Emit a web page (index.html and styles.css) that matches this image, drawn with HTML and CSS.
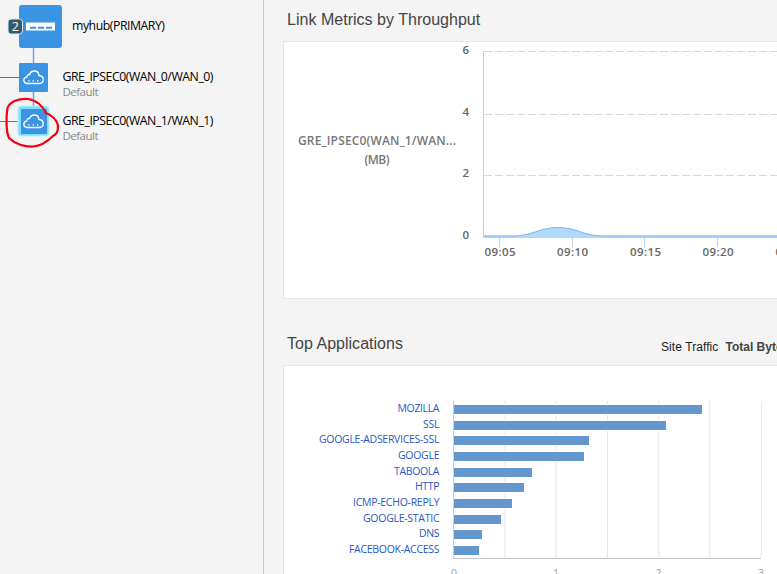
FILE: index.html
```
<!DOCTYPE html>
<html lang="en">
<head>
<meta charset="utf-8">
<title>Link Metrics</title>
<link rel="stylesheet" href="styles.css">
</head>
<body>
<div class="app">
  <aside class="sidebar">
    <svg class="topology" width="263" height="574" viewBox="0 0 263 574">
      <defs>
        <g id="cloud" fill="none" stroke="#fff" stroke-width="1.3">
          <path d="M4 13.5C1.5 13.3.8 12 .8 10.3.8 8.4 2 7.3 3.8 7.2 3.6 5 5.2 4.2 6.5 4.6 7.4 2.2 9 1 11.2 1c2.8 0 4.6 1.8 4.7 4.5 2.9.2 4.3 1.8 4.3 4s-1.4 4-3.8 4z"/>
          <path d="M5.2 10.8h1.4M9.6 10.8H11M14 10.8h1.4"/>
        </g>
      </defs>
      <path class="link" d="M33.5 48v15M33.5 92v15"/>
      <path class="tunnel" d="M0 77.500h19M0 121.500h18"/>
      <rect class="node" x="19" y="5" width="43" height="43" rx="3"/>
      <rect x="26" y="22.500" width="29" height="8" fill="#fff"/>
      <path d="M30 27.800h6M38 27.800h6M46 27.800h6" stroke="#3b93e3" stroke-width="2"/>
      <rect class="badge" x="8" y="19" width="14.500" height="15" rx="3"/>
      <text class="badge-text" x="15.400" y="30.500">2</text>
      <rect class="node" x="19" y="63" width="29" height="29" rx="1"/>
      <use href="#cloud" x="23" y="70"/>
      <rect class="glow" x="18" y="106" width="31" height="30" rx="3"/>
      <rect class="node" x="21" y="109" width="26" height="25" rx="1"/>
      <use href="#cloud" x="23" y="114"/>
      <path class="marker" d="M46 113C43 106 36 100 28 99 19 98.500 10 101 7.500 108 6 117 6 132 9 138 15 144 25 147 33 146.500 41 146 48 141 53 136 58 134 58 129 58 125 56 119 51 115 46 113"/>
      <text class="name" x="72" y="30" textLength="93">myhub(PRIMARY)</text>
      <text class="name" x="62.500" y="81" textLength="151">GRE_IPSEC0(WAN_0/WAN_0)</text>
      <text class="sub" x="62.500" y="96" textLength="36">Default</text>
      <text class="name" x="62.500" y="125" textLength="151">GRE_IPSEC0(WAN_1/WAN_1)</text>
      <text class="sub" x="62.500" y="140" textLength="36">Default</text>
    </svg>
  </aside>
  <main class="main">
    <header class="head"><h2>Link Metrics by Throughput</h2></header>
    <section class="panel throughput">
      <svg width="493" height="256" viewBox="284 42 493 256">
        <g class="series">
          <text x="377" y="145" textLength="158">GRE_IPSEC0(WAN_1/WAN...</text>
          <text x="377" y="164" textLength="25">(MB)</text>
        </g>
        <path class="dash" d="M484 51.500h293M484 114.500h293M484 175.500h293"/>
        <path d="M484 235.800h29C532 235.800 539 227.500 558 227.500S583 235.800 603 235.800H777V237H484z" fill="#afdafc"/>
        <path d="M484 236h29C532 236 539 227.500 558 227.500S583 236 603 236H777" fill="none" stroke="#7cb5ec"/>
        <path class="axis" d="M483.500 51v186M483 237.500h294M499.500 238v9M572.500 238v9M644.500 238v9M717.500 238v9"/>
        <g class="tick ylab">
          <text x="469" y="54">6</text><text x="469" y="116">4</text><text x="469" y="177">2</text><text x="469" y="239">0</text>
        </g>
        <g class="tick xlab">
          <text x="500" y="256" textLength="31">09:05</text><text x="572.500" y="256" textLength="31">09:10</text><text x="645.500" y="256" textLength="31">09:15</text><text x="718" y="256" textLength="31">09:20</text><text x="791" y="256" textLength="31">09:25</text>
        </g>
      </svg>
    </section>
    <header class="head apps-head">
      <h2>Top Applications</h2>
      <div class="options"><span>Site Traffic</span><b>Total Bytes</b></div>
    </header>
    <section class="panel apps">
      <svg width="493" height="220" viewBox="284 366 493 220">
        <path class="grid" d="M505 401v157M556 401v157M607.500 401v157M658.800 401v157M709.800 401v157M761.300 401v157"/>
        <g class="bars">
          <rect x="453" y="404.500" width="249.500" height="10"/>
          <rect x="453" y="420.500" width="213.500" height="10"/>
          <rect x="453" y="435.500" width="136.500" height="10"/>
          <rect x="453" y="451.500" width="131.500" height="10"/>
          <rect x="453" y="467.500" width="79.500" height="10"/>
          <rect x="453" y="482.500" width="71.500" height="10"/>
          <rect x="453" y="498.500" width="59.500" height="10"/>
          <rect x="453" y="514.500" width="48.500" height="10"/>
          <rect x="453" y="529.500" width="29.500" height="10"/>
          <rect x="453" y="545.500" width="26.500" height="10"/>
        </g>
        <path d="M453.500 401v157" stroke="#c0d0e0"/>
        <path d="M453 558.500h308" stroke="#c8c8c8"/>
        <g class="app-label">
          <text x="439.500" y="412" textLength="42">MOZILLA</text>
          <text x="439.500" y="428" textLength="16.500">SSL</text>
          <text x="439.500" y="443" textLength="120.500">GOOGLE-ADSERVICES-SSL</text>
          <text x="439.500" y="459" textLength="41.500">GOOGLE</text>
          <text x="439.500" y="475" textLength="45.500">TABOOLA</text>
          <text x="439.500" y="490" textLength="24.500">HTTP</text>
          <text x="439.500" y="506" textLength="86.500">ICMP-ECHO-REPLY</text>
          <text x="439.500" y="522" textLength="76.500">GOOGLE-STATIC</text>
          <text x="439.500" y="537" textLength="20.500">DNS</text>
          <text x="439.500" y="553" textLength="90.500">FACEBOOK-ACCESS</text>
        </g>
        <g class="bytes">
          <text x="454" y="577">0</text><text x="556" y="577">1</text><text x="658.500" y="577">2</text><text x="761" y="577">3</text>
        </g>
      </svg>
    </section>
  </main>
</div>
</body>
</html>
```
FILE: styles.css
```
* { box-sizing: border-box; }
body { margin: 0; width: 777px; height: 574px; overflow: hidden; background: #f4f4f4; font-family: "Liberation Sans", Arial, sans-serif; }
svg { display: block; }
.app { display: flex; height: 574px; }
.sidebar { flex: 0 0 264px; border-right: 1px solid #c8c8c8; }
.main { flex: 1; min-width: 0; padding-left: 19px; overflow: hidden; }
.head { height: 41px; padding: 10px 0 0 4px; display: flex; white-space: nowrap; }
.head h2 { margin: 0; flex: 0 0 374px; font-size: 16px; line-height: 20px; font-weight: 400; color: #444; letter-spacing: 0.02px; }
.apps-head { height: 66px; padding-top: 35px; }
.options { display: flex; gap: 7px; font-size: 12px; line-height: 14px; padding-top: 6px; color: #222; }
.options span { letter-spacing: 0.08px; }
.options b { color: #444; }
.panel { background: #fff; border: 1px solid #e6e6e6; border-right: 0; overflow: hidden; }
.throughput { height: 258px; }
.apps { height: 220px; }

.topology text, .throughput text, .apps text { font-family: "Open Sans", sans-serif; }
.link { stroke: #6ba5dc; stroke-width: 1.5; }
.tunnel { stroke: #389738; stroke-width: 1.2; }
.node { fill: #3b93e3; }
.badge { fill: #315c6b; stroke: #dfe8ec; stroke-width: 1; }
.topology .badge-text { font-size: 12.5px; fill: #fff; text-anchor: middle; }
.glow { fill: #7de1fb; stroke: #b9effb; stroke-width: 1; }
.marker { fill: none; stroke: #f5000c; stroke-width: 2.2; stroke-linejoin: round; stroke-linecap: round; }
.topology .name { font-size: 12.3px; fill: #000; }
.topology .sub { font-size: 11.5px; fill: #888; }

.series { font-size: 12px; font-weight: 600; fill: #777; text-anchor: middle; }
.dash { stroke: #d8d8d8; stroke-dasharray: 8 3; }
.axis { stroke: #c0d0e0; fill: none; }
.tick { font-size: 11.5px; font-weight: 600; fill: #666; }
.ylab { text-anchor: end; }
.xlab { text-anchor: middle; }
.grid { stroke: #e6e6e6; }
.bars { fill: #6398ce; stroke: #fff; stroke-width: 1; }
.app-label { font-size: 10.5px; fill: #2858c4; text-anchor: end; }
.bytes { font-size: 10.5px; fill: #9aa5ae; text-anchor: middle; }
```
